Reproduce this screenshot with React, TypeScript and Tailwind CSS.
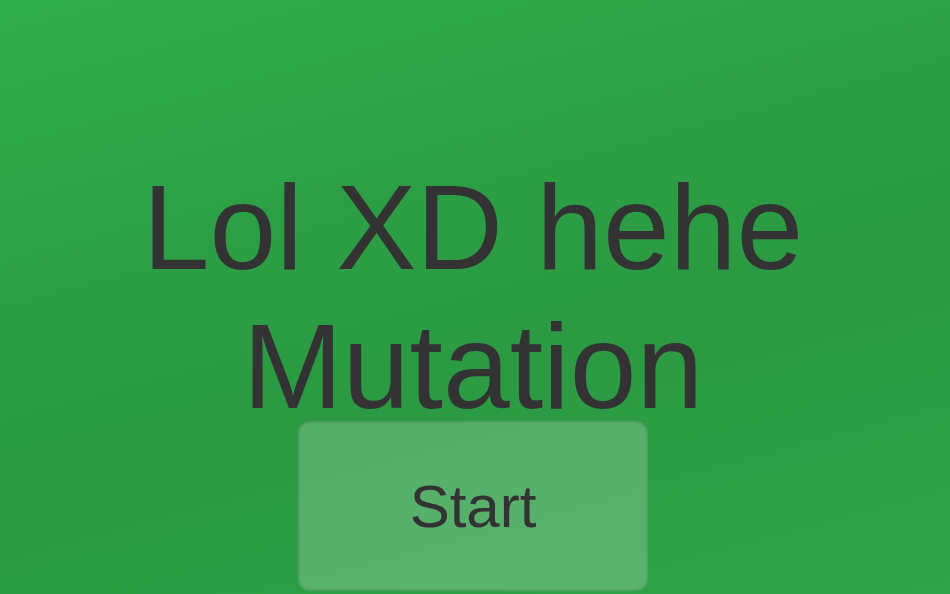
import React from "react";

export default function App() {
  return (
    <div
      className="w-[950px] h-[594px] overflow-hidden flex flex-col items-center bg-[linear-gradient(165deg,#2fae4a_0%,#2c9f45_35%,#2b9a43_60%,#2fa34a_100%)] pr-[4px]"
      style={{ fontFamily: '"Liberation Sans", Arial, sans-serif' }}
    >
      <h1 className="mt-[158px] text-[120px] leading-[139px] text-[#333333] text-center font-normal">
        Lol XD hehe
        <br />
        Mutation
      </h1>
      <button className="mt-[-15px] w-[350px] h-[170px] rounded-[12px] border-2 border-[rgba(0,0,0,0.08)] bg-[rgba(255,255,255,0.2)] text-[60px] text-[#333333] flex items-center justify-center pt-[2px]">
        Start
      </button>
    </div>
  );
}
